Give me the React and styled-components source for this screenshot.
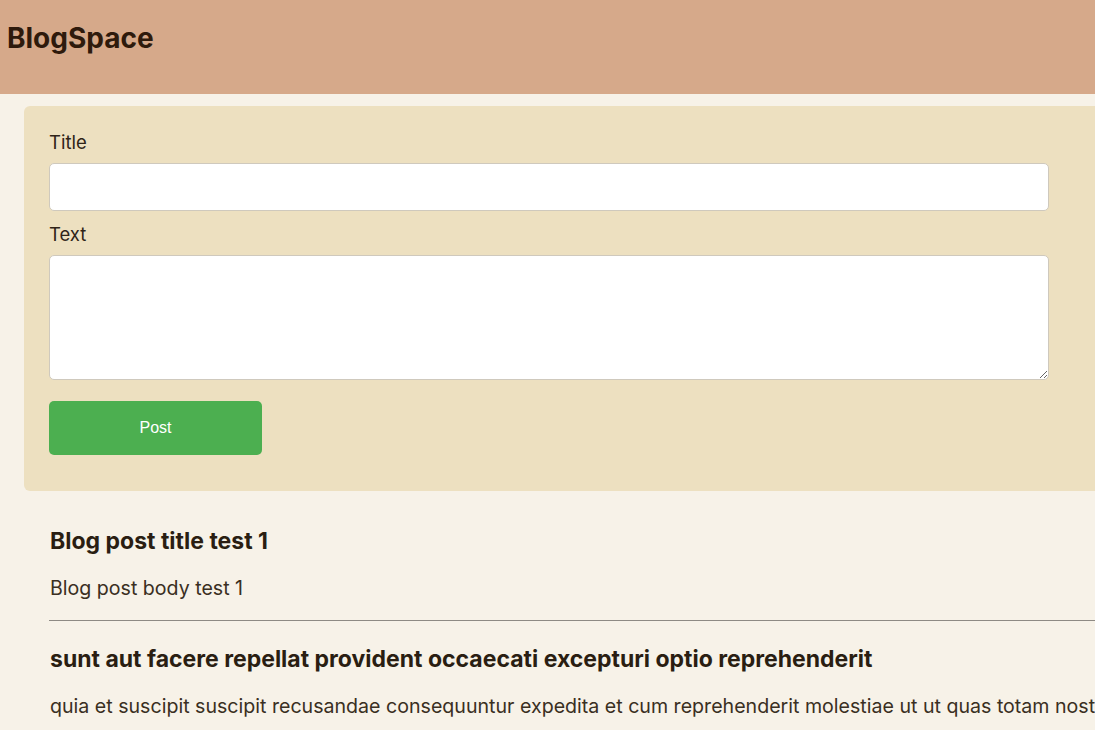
import React from 'react';
import styled, { createGlobalStyle } from 'styled-components';

const GlobalStyle = createGlobalStyle`
  html, body {
    margin: 0;
    padding: 0;
    overflow: hidden;
    background: #f7f2e8;
  }
  body {
    font-family: Inter, Lato, sans-serif;
    color: #2a1e12;
  }
`;

const Page = styled.div`
  min-width: 1300px;
  min-height: 730px;
  background: #f7f2e8;
`;

const Header = styled.header`
  height: 94px;
  background: #d6a98a;
  display: flex;
  align-items: flex-start;
  padding: 0 7px;
`;

const Brand = styled.h1`
  margin: 20px 0 0;
  font-size: 28px;
  line-height: 36px;
  font-weight: 650;
  color: #2e1a0c;
`;

const Main = styled.main`
  padding: 12px 0 0 24px;
`;

const FormCard = styled.form`
  background: #ede0c0;
  border-radius: 6px;
  padding: 25px 25px 36px;
  display: flex;
  flex-direction: column;
`;

const Label = styled.label`
  font-size: 18.5px;
  color: #2f2418;
  line-height: 22px;
  margin: ${p => (p.$first ? '0' : '12px')} 0 10px;
`;

const TextInput = styled.input`
  box-sizing: border-box;
  width: 1000px;
  height: 48px;
  border: 1px solid #cfc9bd;
  border-radius: 5px;
  background: #fff;
  font-size: 16px;
  padding: 0 10px;
`;

const TextArea = styled.textarea`
  box-sizing: border-box;
  width: 1000px;
  height: 125px;
  border: 1px solid #cfc9bd;
  border-radius: 5px;
  background: #fff;
  font-size: 16px;
  padding: 10px;
`;

const PostButton = styled.button`
  margin-top: 21px;
  width: 213px;
  height: 54px;
  border: none;
  border-radius: 5px;
  background: #4caf50;
  color: #fff;
  font-family: "Liberation Sans", Arial, sans-serif;
  font-size: 16px;
  cursor: pointer;
`;

const PostList = styled.section`
  padding: 36px 0 0 25px;
`;

const Post = styled.article`
  border-bottom: ${p => (p.$last ? 'none' : '1px solid #8e8a84')};
  padding-bottom: 20px;
  margin-bottom: 24px;
`;

const PostTitle = styled.h2`
  margin: 0 0 21px 1px;
  font-size: 23px;
  font-weight: 650;
  line-height: 28px;
  color: #2a1e12;
`;

const PostBody = styled.p`
  margin: 0 0 0 1px;
  font-size: 19.6px;
  line-height: 24px;
  color: #3a2f22;
  white-space: nowrap;
`;

const posts = [
  { id: 1, title: 'Blog post title test 1', body: 'Blog post body test 1' },
  {
    id: 2,
    title: 'sunt aut facere repellat provident occaecati excepturi optio reprehenderit',
    body: 'quia et suscipit suscipit recusandae consequuntur expedita et cum reprehenderit molestiae ut ut quas totam nost',
  },
];

export default function App() {
  return (
    <Page>
      <GlobalStyle />
      <Header>
        <Brand>BlogSpace</Brand>
      </Header>
      <Main>
        <FormCard onSubmit={e => e.preventDefault()}>
          <Label $first htmlFor="title">Title</Label>
          <TextInput id="title" type="text" />
          <Label htmlFor="body">Text</Label>
          <TextArea id="body" />
          <div>
            <PostButton type="submit">Post</PostButton>
          </div>
        </FormCard>
        <PostList>
          {posts.map((p, i) => (
            <Post key={p.id} $last={i === posts.length - 1}>
              <PostTitle>{p.title}</PostTitle>
              <PostBody>{p.body}</PostBody>
            </Post>
          ))}
        </PostList>
      </Main>
    </Page>
  );
}
